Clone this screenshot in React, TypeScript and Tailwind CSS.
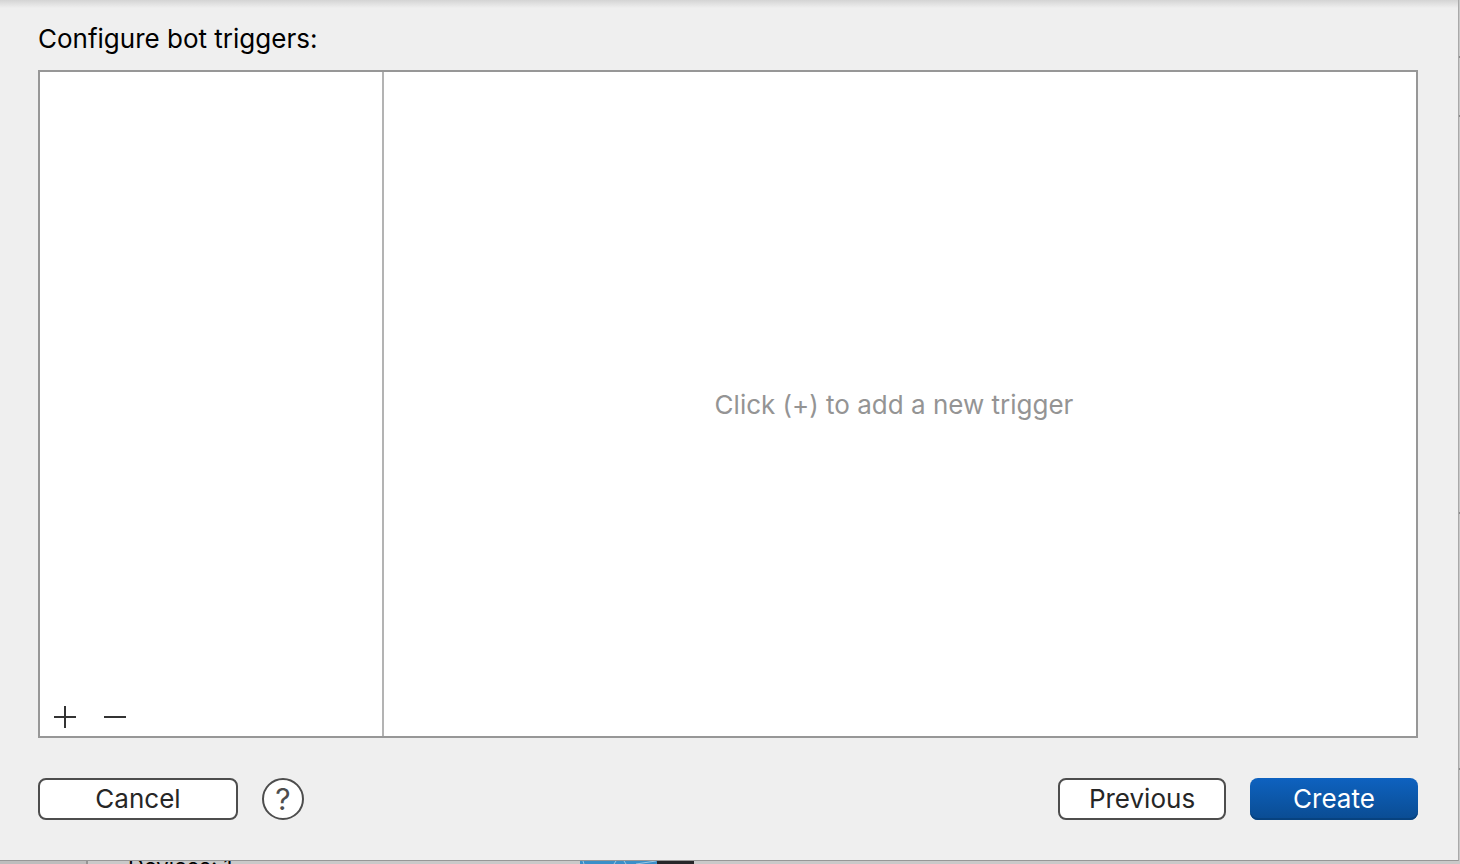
import React, { useState } from 'react';

const SIDE_TICKS = ['grow-[56]', 'grow-[57]', 'grow-[396]', 'grow-[254]'];

function PlusIcon() {
  return (
    <svg width="22" height="22" viewBox="0 0 22 22" shapeRendering="crispEdges" aria-hidden="true">
      <path d="M0 11H22M11 0V22" stroke="#333333" strokeWidth="2" />
    </svg>
  );
}

function MinusIcon() {
  return (
    <svg width="22" height="22" viewBox="0 0 22 22" shapeRendering="crispEdges" aria-hidden="true">
      <path d="M0 11H22" stroke="#333333" strokeWidth="2" />
    </svg>
  );
}

// top edge of the app icon in the window behind the sheet
function AppIcon() {
  return (
    <svg width="114" height="3" viewBox="0 0 114 3" aria-hidden="true">
      <rect width="78" height="3" fill="#3a8fc9" />
      <rect x="77" width="37" height="3" fill="#262729" />
      <path d="M3 0L4 3M36 0L34 3M44 0L46 3M56 3L76 0" stroke="#9cc8e4" strokeWidth="1" fill="none" />
    </svg>
  );
}

export default function App() {
  const [triggers, setTriggers] = useState<string[]>([]);

  return (
    <div className="h-screen flex flex-col overflow-hidden bg-[#c9c9c9] font-['Inter',sans-serif] text-[26px] leading-8 text-[#262626]">
      <div className="flex-1 min-h-0 flex">
        <main className="flex-1 min-w-0 flex flex-col bg-[#efefef] border-r border-b border-r-[#a9a9a9] border-b-[#979797]">
          <div className="h-2 bg-linear-to-b from-[#d4d4d4] to-[#efefef]" />
          <div className="flex-1 min-h-0 flex flex-col px-[38px] pt-[15px] pb-10">
            <h1 className="text-black">Configure bot triggers:</h1>
            <section className="flex-1 min-h-0 mt-[15px] mr-[2px] flex bg-white border-2 border-[#979797]">
              <aside className="w-[344px] shrink-0 flex flex-col border-r-2 border-[#b3b3b3]">
                <ul className="flex-1 min-h-0 overflow-auto">
                  {triggers.map((name) => (
                    <li key={name} className="px-4 py-1">
                      {name}
                    </li>
                  ))}
                </ul>
                <div className="flex gap-7 px-[14px] pb-2">
                  <button
                    aria-label="Add trigger"
                    onClick={() => setTriggers((prev) => [...prev, `Trigger ${prev.length + 1}`])}
                  >
                    <PlusIcon />
                  </button>
                  <button
                    aria-label="Remove trigger"
                    onClick={() => setTriggers((prev) => prev.slice(0, -1))}
                  >
                    <MinusIcon />
                  </button>
                </div>
              </aside>
              <div className="flex-1 flex items-center justify-center pt-[2px] pr-3 text-[#949494]">
                <p>Click (+) to add a new trigger</p>
              </div>
            </section>
            <footer className="mt-10 mr-[2px] flex items-center gap-6">
              <button className="w-[200px] h-[42px] flex items-center justify-center rounded-lg border-2 border-[#4d4d4d] bg-white">
                Cancel
              </button>
              <button
                aria-label="Help"
                className="size-[42px] flex items-center justify-center rounded-full border-2 border-[#4d4d4d] bg-white text-[30px] text-[#4d4d4d]"
              >
                ?
              </button>
              <div className="flex-1" />
              <button className="w-[168px] h-[42px] flex items-center justify-center rounded-lg border-2 border-[#4d4d4d] bg-white">
                Previous
              </button>
              <button className="w-[168px] h-[42px] flex items-center justify-center rounded-lg bg-linear-to-b from-[#0e62c0] to-[#0a4c92] shadow-[inset_0_-2px_0_#07427f] text-white">
                Create
              </button>
            </footer>
          </div>
        </main>
        <div className="w-px flex flex-col">
          {SIDE_TICKS.map((grow) => (
            <div key={grow} className={`${grow} basis-0 border-b-2 border-[#8c8c8c]`} />
          ))}
          <div className="grow-[91] basis-0" />
        </div>
      </div>
      <div className="h-[3px] flex overflow-hidden">
        <div className="w-[88px] shrink-0 bg-[#bdbdbd] border-r-2 border-[#949494]" />
        <p className="w-[492px] shrink-0 pl-10 text-[22px] leading-[10px] text-black">Devices: 1</p>
        <AppIcon />
      </div>
    </div>
  );
}
